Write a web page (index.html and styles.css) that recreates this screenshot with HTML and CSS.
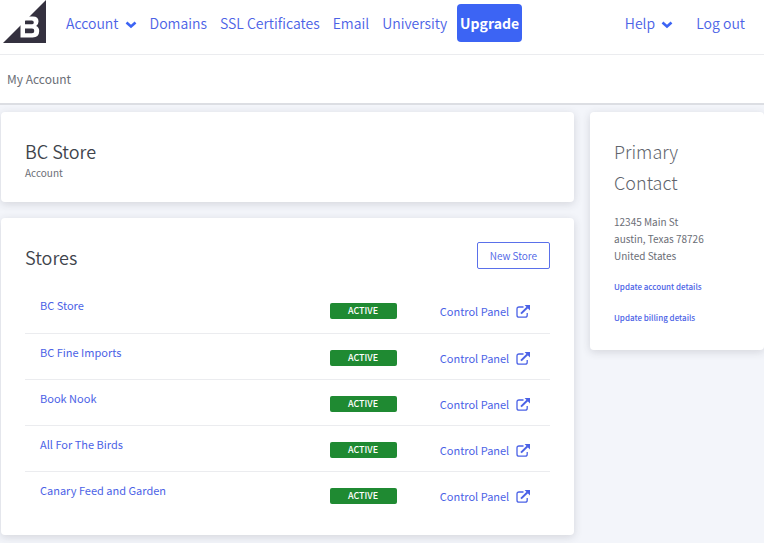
FILE: index.html
```html
<!DOCTYPE html>
<html lang="en">
<head>
<meta charset="utf-8">
<title>My Account</title>
<link rel="stylesheet" href="styles.css">
</head>
<body>
<svg class="sprite" aria-hidden="true">
  <symbol id="chevron" viewBox="0 0 12 8"><path d="M1.500 1.500L6 5.500l4.500-4" fill="none" stroke="currentColor" stroke-width="2.600"/></symbol>
  <symbol id="external" viewBox="0 0 14 13"><path d="M7.500 2H3Q1 2 1 4v6.200Q1 12.200 3 12.200h6.200Q11.200 12.200 11.200 10.200V8" fill="none" stroke="currentColor" stroke-width="1.300"/><path d="M5 8.600L11.500 2.200" stroke="currentColor" stroke-width="2"/><path d="M8.600 0H14v5.400z" fill="currentColor"/></symbol>
</svg>
<header>
  <nav class="topbar">
    <a class="logo" href="#" aria-label="Home">
      <svg viewBox="0 0 43 43" width="43" height="43"><path d="M43 0v43H0z" fill="#34313f"/><path d="M17.500 16.500H30q5.500 0 5.500 5 0 3.200-2.300 4.500 3 1.300 3 5 0 6.500-6.700 6.500h-12z" fill="#fff"/><path d="M22 21l.5-.5h6.300q2 0 2 1.900T28.800 24.300H22zM22 28.500h7q2.300 0 2.300 2.400T29 33.300h-7z" fill="#34313f"/></svg>
    </a>
    <a href="#">Account <svg class="chevron"><use href="#chevron"/></svg></a>
    <a href="#">Domains</a>
    <a href="#">SSL Certificates</a>
    <a href="#">Email</a>
    <a href="#">University</a>
    <a class="upgrade" href="#">Upgrade</a>
    <a class="help" href="#">Help <svg class="chevron"><use href="#chevron"/></svg></a>
    <a class="logout" href="#">Log out</a>
  </nav>
  <div class="subbar">My Account</div>
</header>
<main>
  <div class="content">
    <section class="card account">
      <h1>BC Store</h1>
      <p>Account</p>
    </section>
    <section class="card stores">
      <div class="stores-head">
        <h2>Stores</h2>
        <button type="button">New Store</button>
      </div>
      <table>
        <tbody>
          <tr><td class="name"><a href="#">BC Store</a></td><td class="status"><span>ACTIVE</span></td><td class="panel"><a href="#">Control Panel <svg><use href="#external"/></svg></a></td></tr>
          <tr><td class="name"><a href="#">BC Fine Imports</a></td><td class="status"><span>ACTIVE</span></td><td class="panel"><a href="#">Control Panel <svg><use href="#external"/></svg></a></td></tr>
          <tr><td class="name"><a href="#">Book Nook</a></td><td class="status"><span>ACTIVE</span></td><td class="panel"><a href="#">Control Panel <svg><use href="#external"/></svg></a></td></tr>
          <tr><td class="name"><a href="#">All For The Birds</a></td><td class="status"><span>ACTIVE</span></td><td class="panel"><a href="#">Control Panel <svg><use href="#external"/></svg></a></td></tr>
          <tr><td class="name"><a href="#">Canary Feed and Garden</a></td><td class="status"><span>ACTIVE</span></td><td class="panel"><a href="#">Control Panel <svg><use href="#external"/></svg></a></td></tr>
        </tbody>
      </table>
    </section>
  </div>
  <aside class="card contact">
    <h2>Primary Contact</h2>
    <address>12345 Main St<br>austin, Texas 78726<br>United States</address>
    <a href="#">Update account details</a>
    <a href="#">Update billing details</a>
  </aside>
</main>
</body>
</html>
```
FILE: styles.css
```css
* { box-sizing: border-box; }
body {
  margin: 0;
  background: #f3f5fa;
  color: #6b6e76;
  font-family: "Noto Sans CJK SC", "Open Sans", sans-serif;
  font-size: 12px;
  line-height: 16px;
}
h1, h2, p { margin: 0; }
a { color: #4b62e6; text-decoration: none; }
.sprite { position: absolute; width: 0; height: 0; }

header { background: #fff; border-bottom: 2px solid #dcdee3; }
.topbar {
  display: flex;
  align-items: center;
  gap: 13px;
  height: 55px;
  padding: 0 19px 8px 3px;
  border-bottom: 1px solid #ebecef;
  font-size: 14px;
  font-weight: 350;
  line-height: 20px;
  white-space: nowrap;
}
.logo { height: 43px; margin: 0 7px 3px 0; }
.logo svg { display: block; }
.chevron { width: 12px; height: 8px; margin-left: 3px; color: #3c64f4; }
.upgrade {
  margin-left: -3px;
  padding: 9px 3px;
  border-radius: 4px;
  background: #3c64f4;
  color: #fff;
  font-weight: 700;
}
.help { margin-left: auto; }
.logout { margin-left: 10px; }
.subbar { padding: 14px 7px; font-size: 12px; line-height: 20px; }

main {
  display: grid;
  grid-template-columns: 573fr 174fr;
  gap: 16px;
  align-items: start;
  padding: 7px 0 8px 1px;
}
.content { display: grid; gap: 16px; }
.card {
  padding: 24px;
  border-radius: 4px;
  background: #fff;
  box-shadow: 0 2px 8px rgba(49, 52, 64, 0.16);
}
h1, h2 { color: #40444c; font-size: 18px; font-weight: 350; line-height: 31px; }
.account p { font-size: 10px; line-height: 11px; }
.stores { padding-bottom: 18px; }
.stores-head {
  display: flex;
  justify-content: space-between;
  align-items: flex-start;
  height: 45px;
}
button {
  height: 27px;
  padding: 0 12px;
  border: 1px solid #5a70ea;
  border-radius: 2px;
  background: #fff;
  color: #4b62e6;
  font: 350 10px/16px "Noto Sans CJK SC", "Open Sans", sans-serif;
}
table { width: 100%; border-collapse: collapse; table-layout: fixed; }
tr + tr { border-top: 1px solid #ebecef; }
td { height: 46px; padding: 16px 0 0; vertical-align: top; font-size: 11px; }
td.name { width: 58%; padding: 10px 0 0 15px; }
td.status { width: 21%; }
.status span {
  display: block;
  width: 67px;
  border-radius: 2px;
  background: #1f8a32;
  color: #fff;
  font-size: 9px;
  font-weight: 500;
  line-height: 16px;
  text-align: center;
}
.panel svg { width: 14px; height: 13px; margin-left: 4px; vertical-align: -2px; }

.contact h2 { margin-bottom: 15px; color: #60646c; font-weight: 300; }
address { margin-bottom: 15px; font-size: 10px; font-style: normal; line-height: 17px; }
.contact a { display: block; font-size: 8px; font-weight: 500; line-height: 16px; }
.contact a + a { margin-top: 15px; }
```
